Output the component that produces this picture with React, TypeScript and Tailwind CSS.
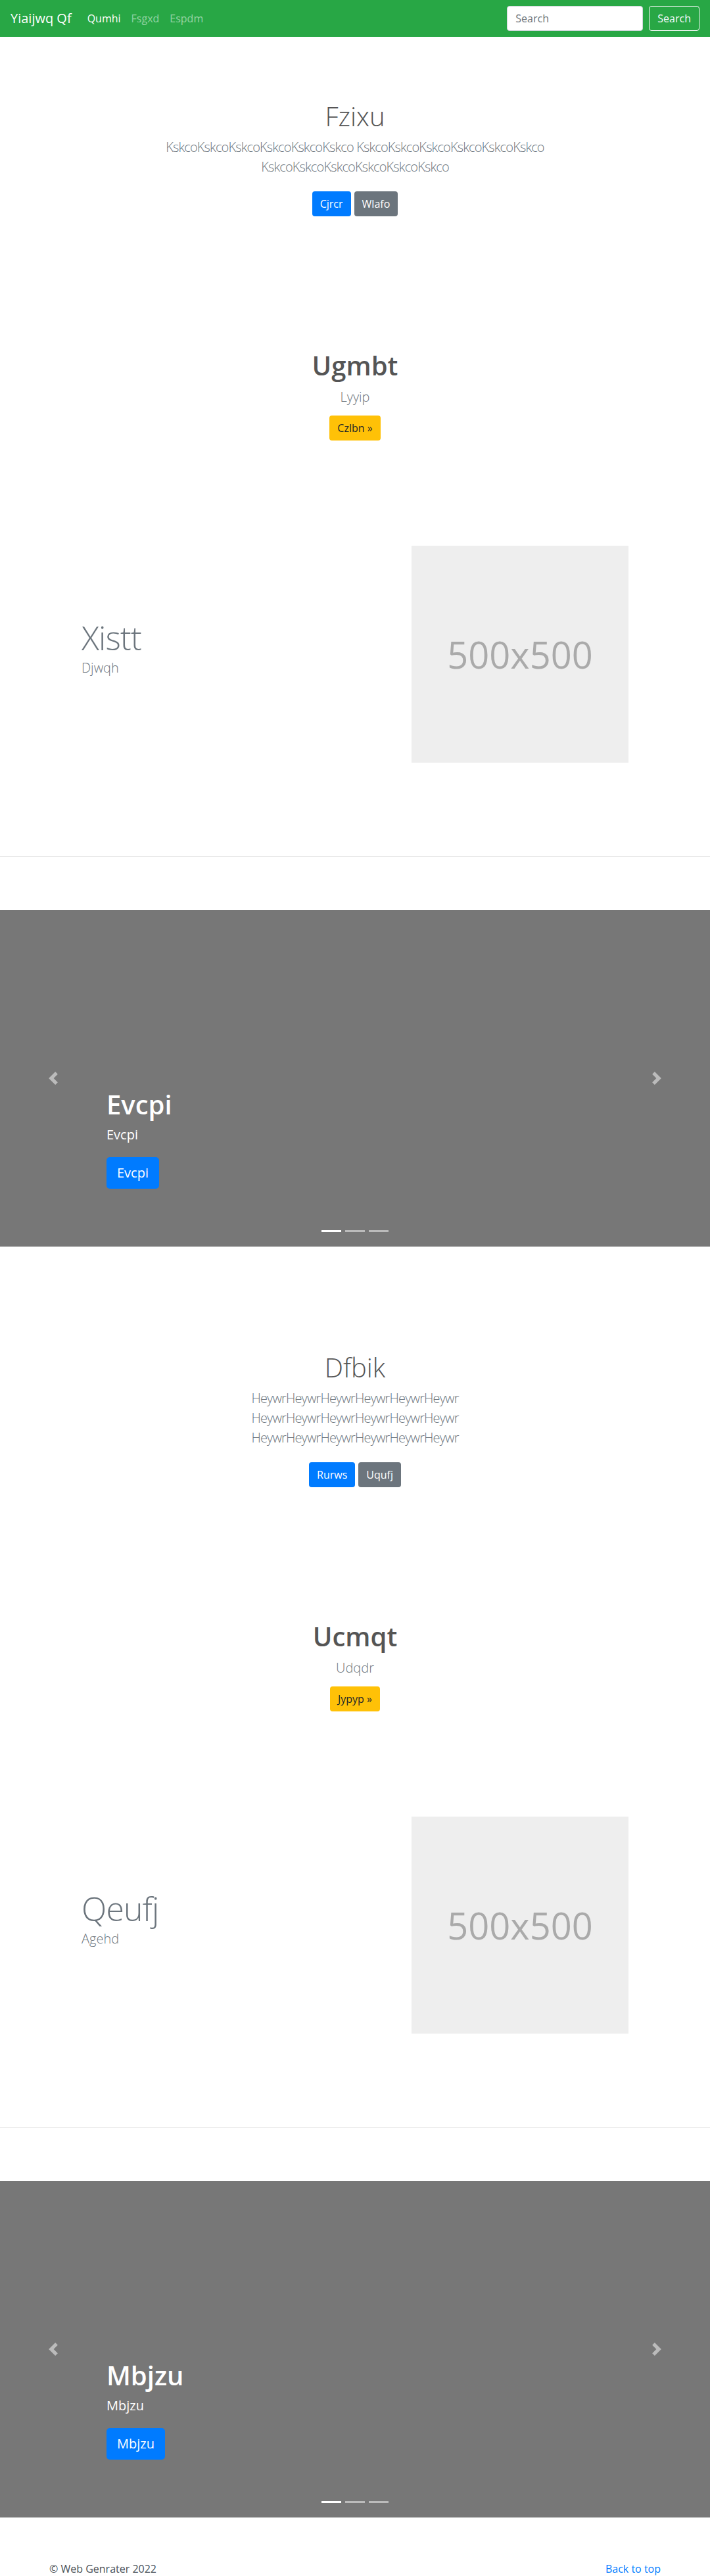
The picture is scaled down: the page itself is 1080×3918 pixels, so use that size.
import React from 'react';

type HeroProps = {
    title: string;
    lines: string[];
    primary: string;
    secondary: string;
    className: string;
};

function Hero({ title, lines, primary, secondary, className }: HeroProps) {
    return (
        <section className={className}>
            <div className="mx-auto max-w-[640px] text-center">
                <h1 className="mb-2 text-[40px] font-light leading-[48px] text-[#555]">{title}</h1>
                <p className="text-xl font-light leading-[30px] tracking-[-0.85px] text-[#6c757d]">
                    {lines.map((line, i) => (
                        <span key={i} className="block">{line}</span>
                    ))}
                </p>
                <div className="mt-[22px] flex justify-center gap-[5px]">
                    <a href="#" className="flex h-[38px] items-center rounded bg-[#007bff] px-3 text-base text-white">{primary}</a>
                    <a href="#" className="flex h-[38px] items-center rounded bg-[#6c757d] px-3 text-base text-white">{secondary}</a>
                </div>
            </div>
        </section>
    );
}

function Callout({ title, sub, action }: { title: string; sub: string; action: string }) {
    return (
        <section className="pt-[203px] text-center">
            <h2 className="text-[40px] font-semibold leading-[48px] text-[#555]">{title}</h2>
            <p className="mt-[9px] text-xl font-light leading-[30px] text-[#6c757d]">{sub}</p>
            <div className="mt-[13px] flex justify-center">
                <a href="#" className="flex h-[38px] items-center rounded bg-[#ffc107] px-3 text-base text-[#212529]">
                    {action} »
                </a>
            </div>
        </section>
    );
}

function Feature({ title, sub }: { title: string; sub: string }) {
    return (
        <section className="pt-[160px]">
            <div className="flex items-center justify-between px-[124px]">
                <div className="pb-[14px]">
                    <h2 className="text-[50px] font-light leading-none tracking-[-0.05rem] text-[#6c757d]">{title}</h2>
                    <p className="mt-[6px] text-xl font-light leading-[30px] text-[#6c757d]">{sub}</p>
                </div>
                <div className="flex h-[330px] w-[330px] items-center justify-center bg-[#eee] text-[56px] text-[#aaa]">
                    500x500
                </div>
            </div>
            <hr className="mb-[81px] mt-[142px] border-0 border-t border-black/10" />
        </section>
    );
}

function Chevron({ dir }: { dir: 'prev' | 'next' }) {
    const d = dir === 'prev'
        ? 'M5.25 0l-4 4 4 4 1.5-1.5L4.25 4l2.5-2.5L5.25 0z'
        : 'M2.75 0l-1.5 1.5L3.75 4l-2.5 2.5L2.75 8l4-4-4-4z';
    return (
        <svg viewBox="0 0 8 8" width="20" height="20" className="opacity-50">
            <path d={d} fill="#fff" />
        </svg>
    );
}

function Carousel({ label }: { label: string }) {
    return (
        <div className="relative h-[512px] overflow-hidden bg-[#777]">
            <a href="#" className="absolute inset-y-0 left-0 flex w-[15%] items-center justify-center">
                <Chevron dir="prev" />
            </a>
            <a href="#" className="absolute inset-y-0 right-0 flex w-[15%] items-center justify-center">
                <Chevron dir="next" />
            </a>
            <div className="absolute bottom-[48px] left-[15%] right-[15%] py-5 text-left text-white">
                <h1 className="mb-2 text-[40px] font-semibold leading-[48px]">{label}</h1>
                <p className="mb-5 text-xl leading-[28px]">{label}</p>
                <p className="mb-5">
                    <a href="#" className="inline-flex h-12 items-center rounded-[5px] bg-[#007bff] px-4 text-xl text-white">
                        {label}
                    </a>
                </p>
            </div>
            <ol className="absolute bottom-[22px] left-0 right-0 flex justify-center gap-[6px]">
                <li className="h-[3px] w-[30px] bg-white" />
                <li className="h-[3px] w-[30px] bg-white/50" />
                <li className="h-[3px] w-[30px] bg-white/50" />
            </ol>
        </div>
    );
}

export default function App() {
    const ksk = 'KskcoKskcoKskcoKskcoKskcoKskco';
    const hey = 'HeywrHeywrHeywrHeywrHeywrHeywr';

    return (
        <div className="min-h-screen bg-white font-['Segoe_UI','Open_Sans','Noto_Sans',sans-serif] text-base text-[#212529]">
            <nav className="flex h-14 items-center bg-[#28a745] px-4">
                <a href="#" className="mr-4 text-xl leading-[30px] text-white">Yiaijwq Qf</a>
                <ul className="flex">
                    <li><a href="#" className="block px-2 py-2 text-white">Qumhi</a></li>
                    <li><a href="#" className="block px-2 py-2 text-white/50">Fsgxd</a></li>
                    <li><a href="#" className="block px-2 py-2 text-white/50">Espdm</a></li>
                </ul>
                <form className="ml-auto flex items-center">
                    <input
                        type="search"
                        placeholder="Search"
                        className="mr-[9px] h-[38px] w-[207px] rounded border border-[#ced4da] bg-white px-3 text-base text-[#495057] placeholder:text-[#6c757d]"
                    />
                    <button type="button" className="h-[38px] rounded border border-[#f8f9fa] px-3 text-base text-[#f8f9fa]">
                        Search
                    </button>
                </form>
            </nav>

            <Hero
                className="pt-[97px]"
                title="Fzixu"
                lines={[`${ksk} ${ksk}`, ksk]}
                primary="Cjrcr"
                secondary="Wlafo"
            />
            <Callout title="Ugmbt" sub="Lyyip" action="Czlbn" />
            <Feature title="Xistt" sub="Djwqh" />
            <Carousel label="Evcpi" />

            <Hero
                className="pt-[160px]"
                title="Dfbik"
                lines={[hey, hey, hey]}
                primary="Rurws"
                secondary="Uqufj"
            />
            <Callout title="Ucmqt" sub="Udqdr" action="Jypyp" />
            <Feature title="Qeufj" sub="Agehd" />
            <Carousel label="Mbjzu" />

            <footer className="mx-auto flex max-w-[960px] justify-between px-[15px] pb-12 pt-[66px] leading-6 text-[#495057]">
                <p>© Web Genrater 2022</p>
                <p><a href="#" className="text-[#007bff]">Back to top</a></p>
            </footer>
        </div>
    );
}
